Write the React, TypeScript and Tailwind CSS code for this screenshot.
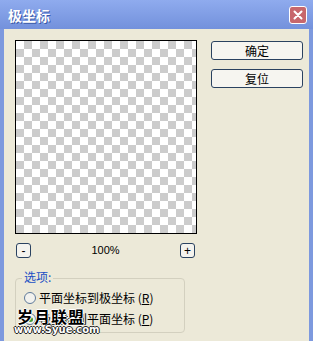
import React from "react";

const cjk = { fontFamily: '"Noto Sans CJK SC", "Liberation Sans", sans-serif' };

function SmallBtn({ label }: { label: string }) {
  return (
    <div className="w-[15px] h-[15px] rounded-[3px] border border-[#2a4260] bg-[#f4f3ee] flex items-center justify-center text-[12px] leading-none text-black" style={{ fontFamily: '"Liberation Sans", sans-serif' }}>
      {label}
    </div>
  );
}

function Btn({ label }: { label: string }) {
  return (
    <div className="w-[92px] h-[19px] rounded-[3px] border border-[#2a4260] bg-[#f6f5f0] flex items-center justify-center text-[12px] leading-none text-black" style={cjk}>
      {label}
    </div>
  );
}

export default function App() {
  return (
    <div className="w-[313px] h-[341px] flex flex-col bg-[#7d99de] overflow-hidden">
      <div className="h-[29px] shrink-0 flex items-center justify-between pl-[8px] pr-[6px] bg-gradient-to-b from-[#8fabee] to-[#7391dc]">
        <span className="text-white font-bold text-[14px] leading-none [text-shadow:1px_1px_0_#3b5aa8]" style={cjk}>极坐标</span>
        <div className="w-[18px] h-[18px] rounded-[3px] border border-white bg-[#c7676c] flex items-center justify-center">
          <svg width="10" height="10" viewBox="0 0 10 10">
            <path d="M1.5 1.5 L8.5 8.5 M8.5 1.5 L1.5 8.5" stroke="white" strokeWidth="2" strokeLinecap="round" />
          </svg>
        </div>
      </div>
      <div className="relative flex-1 mx-[4px] bg-[#ece9d8] pt-[11px] pl-[11px]">
        <div className="flex gap-[14px]">
          <div className="w-[182px] flex flex-col">
            <div className="w-[182px] h-[194px] border border-black bg-[repeating-conic-gradient(#cccccc_0_25%,#ffffff_0_50%)] bg-[length:16px_16px]" />
            <div className="mt-[9px] flex items-center justify-between pl-[1px] pr-[2px]">
              <SmallBtn label="-" />
              <span className="text-[11px] text-black leading-none" style={{ fontFamily: '"Liberation Sans", sans-serif' }}>100%</span>
              <SmallBtn label="+" />
            </div>
            <div className="relative mt-[20px] w-[170px] h-[55px] border border-[#d3d0bf] rounded-[4px]">
              <span className="absolute -top-[8px] left-[6px] px-[2px] bg-[#ece9d8] text-[12px] leading-none text-[#1a4fc4]" style={cjk}>选项:</span>
              <div className="flex flex-col gap-[9px] pt-[13px] pl-[8px]">
                <div className="flex items-center gap-[3px]">
                  <div className="w-[12px] h-[12px] rounded-full border border-[#5f7a9a] bg-[#f2f2ee]" />
                  <span className="text-[12px] leading-none text-black" style={cjk}>平面坐标到极坐标 (<span className="underline">R</span>)</span>
                </div>
                <div className="flex items-center gap-[3px]">
                  <div className="w-[12px] h-[12px] rounded-full border border-[#5f7a9a] bg-[#f2f2ee] flex items-center justify-center">
                    <div className="w-[5px] h-[5px] rounded-full bg-[#3f9a3a]" />
                  </div>
                  <span className="text-[12px] leading-none text-black" style={cjk}>极坐标到平面坐标 (<span className="underline">P</span>)</span>
                </div>
              </div>
            </div>
          </div>
          <div className="flex flex-col gap-[9px] pt-[1px]">
            <Btn label="确定" />
            <Btn label="复位" />
          </div>
        </div>
        <div className="absolute left-[13px] top-[279px] flex flex-col leading-none">
          <span className="text-[16px] font-bold text-black tracking-[1px] [text-shadow:1px_0_0_#fff,-1px_0_0_#fff,0_1px_0_#fff,0_-1px_0_#fff]" style={cjk}>岁月联盟</span>
          <span className="mt-[1px] -ml-[3px] text-[10px] font-bold text-white [text-shadow:1px_0_0_#222,-1px_0_0_#222,0_1px_0_#222,0_-1px_0_#222]" style={{ fontFamily: '"DejaVu Sans", sans-serif' }}>www.Syue.com</span>
        </div>
      </div>
    </div>
  );
}
